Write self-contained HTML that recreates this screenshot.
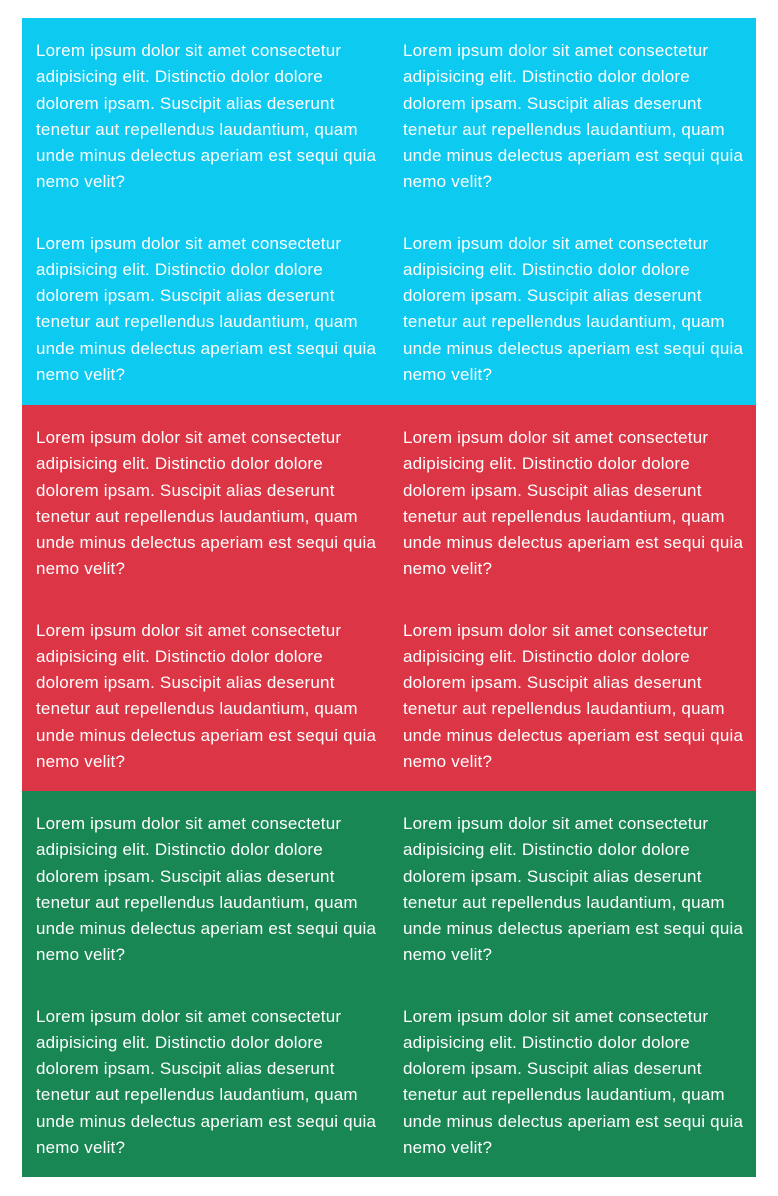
<!DOCTYPE html>
<html><head><meta charset="utf-8">
<style>
html,body{margin:0;padding:0;background:#fff;}
body{width:778px;height:1196px;position:relative;font-family:"Liberation Sans",sans-serif;}
.wrap{position:absolute;left:22px;top:18px;width:734px;}
.sec{height:387px;box-sizing:border-box;padding-top:20px;display:grid;grid-template-columns:367px 367px;grid-template-rows:192.5px 192.5px;color:#fff;overflow:hidden;}
.sec p{margin:0;padding-left:14px;font-size:17px;letter-spacing:0.2px;line-height:26.3px;white-space:nowrap;}
.c{background:#0dcaf0;}.r{background:#dc3545;height:386px;}.g{background:#198754;height:386px;}
</style></head><body>
<div class="wrap">
<div class="sec c">
<p>Lorem ipsum dolor sit amet consectetur<br>adipisicing elit. Distinctio dolor dolore<br>dolorem ipsam. Suscipit alias deserunt<br>tenetur aut repellendus laudantium, quam<br>unde minus delectus aperiam est sequi quia<br>nemo velit?</p>
<p>Lorem ipsum dolor sit amet consectetur<br>adipisicing elit. Distinctio dolor dolore<br>dolorem ipsam. Suscipit alias deserunt<br>tenetur aut repellendus laudantium, quam<br>unde minus delectus aperiam est sequi quia<br>nemo velit?</p>
<p>Lorem ipsum dolor sit amet consectetur<br>adipisicing elit. Distinctio dolor dolore<br>dolorem ipsam. Suscipit alias deserunt<br>tenetur aut repellendus laudantium, quam<br>unde minus delectus aperiam est sequi quia<br>nemo velit?</p>
<p>Lorem ipsum dolor sit amet consectetur<br>adipisicing elit. Distinctio dolor dolore<br>dolorem ipsam. Suscipit alias deserunt<br>tenetur aut repellendus laudantium, quam<br>unde minus delectus aperiam est sequi quia<br>nemo velit?</p>
</div>
<div class="sec r">
<p>Lorem ipsum dolor sit amet consectetur<br>adipisicing elit. Distinctio dolor dolore<br>dolorem ipsam. Suscipit alias deserunt<br>tenetur aut repellendus laudantium, quam<br>unde minus delectus aperiam est sequi quia<br>nemo velit?</p>
<p>Lorem ipsum dolor sit amet consectetur<br>adipisicing elit. Distinctio dolor dolore<br>dolorem ipsam. Suscipit alias deserunt<br>tenetur aut repellendus laudantium, quam<br>unde minus delectus aperiam est sequi quia<br>nemo velit?</p>
<p>Lorem ipsum dolor sit amet consectetur<br>adipisicing elit. Distinctio dolor dolore<br>dolorem ipsam. Suscipit alias deserunt<br>tenetur aut repellendus laudantium, quam<br>unde minus delectus aperiam est sequi quia<br>nemo velit?</p>
<p>Lorem ipsum dolor sit amet consectetur<br>adipisicing elit. Distinctio dolor dolore<br>dolorem ipsam. Suscipit alias deserunt<br>tenetur aut repellendus laudantium, quam<br>unde minus delectus aperiam est sequi quia<br>nemo velit?</p>
</div>
<div class="sec g">
<p>Lorem ipsum dolor sit amet consectetur<br>adipisicing elit. Distinctio dolor dolore<br>dolorem ipsam. Suscipit alias deserunt<br>tenetur aut repellendus laudantium, quam<br>unde minus delectus aperiam est sequi quia<br>nemo velit?</p>
<p>Lorem ipsum dolor sit amet consectetur<br>adipisicing elit. Distinctio dolor dolore<br>dolorem ipsam. Suscipit alias deserunt<br>tenetur aut repellendus laudantium, quam<br>unde minus delectus aperiam est sequi quia<br>nemo velit?</p>
<p>Lorem ipsum dolor sit amet consectetur<br>adipisicing elit. Distinctio dolor dolore<br>dolorem ipsam. Suscipit alias deserunt<br>tenetur aut repellendus laudantium, quam<br>unde minus delectus aperiam est sequi quia<br>nemo velit?</p>
<p>Lorem ipsum dolor sit amet consectetur<br>adipisicing elit. Distinctio dolor dolore<br>dolorem ipsam. Suscipit alias deserunt<br>tenetur aut repellendus laudantium, quam<br>unde minus delectus aperiam est sequi quia<br>nemo velit?</p>
</div>
</div>
</body></html>
